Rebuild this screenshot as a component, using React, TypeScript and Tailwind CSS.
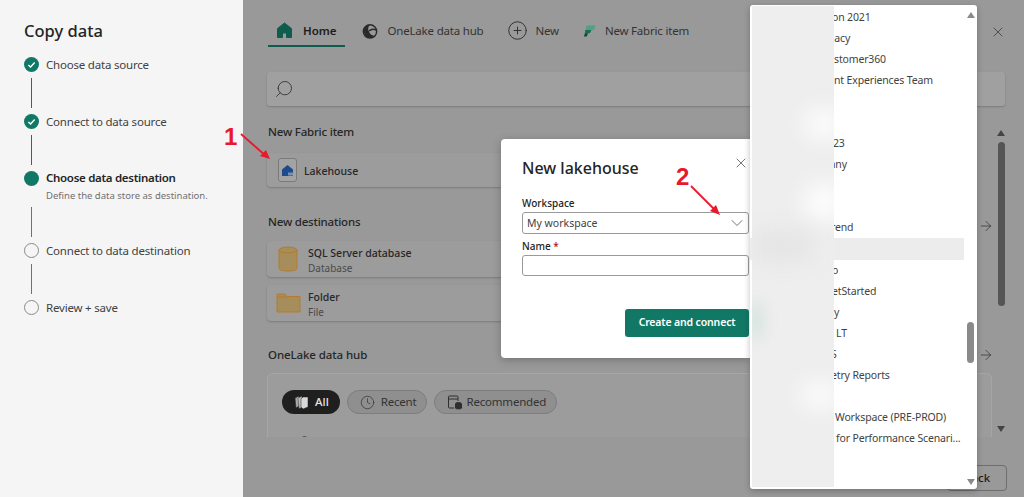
import React from 'react';
import { ChevronDown, CirclePlus, Clock, Search, X, ArrowRight } from 'lucide-react';

const font = { fontFamily: '"Noto Sans", sans-serif' };

const steps = [
  { label: 'Choose data source', state: 'done' },
  { label: 'Connect to data source', state: 'done' },
  { label: 'Choose data destination', state: 'active', hint: 'Define the data store as destination.' },
  { label: 'Connect to data destination', state: 'todo' },
  { label: 'Review + save', state: 'todo' },
];

const workspaces = [
  { text: 'on 2021', pad: 'pl-[82px]' },
  { text: 'gacy', pad: 'pl-[78px]' },
  { text: 'stomer360', pad: 'pl-[84px]' },
  { text: 'nt Experiences Team', pad: 'pl-[84px]' },
  { text: '', pad: '' },
  { text: '', pad: '' },
  { text: '23', pad: 'pl-[83px]' },
  { text: 'nny', pad: 'pl-[79px]' },
  { text: '', pad: '' },
  { text: '', pad: '' },
  { text: 'rend', pad: 'pl-[81px]' },
  { text: '', pad: '', active: true },
  { text: 'o', pad: 'pl-[82px]' },
  { text: 'etStarted', pad: 'pl-[82px]' },
  { text: 'y', pad: 'pl-[84px]' },
  { text: 'LT', pad: 'pl-[86px]' },
  { text: 'S', pad: 'pl-[81px]' },
  { text: 'etry Reports', pad: 'pl-[81px]' },
  { text: '', pad: '' },
  { text: 'Workspace (PRE-PROD)', pad: 'pl-[85px]' },
  { text: 'for Performance Scenari...', pad: 'pl-[86px]' },
];

const StepDot = ({ state }: { state: string }) => {
  if (state === 'todo') {
    return <div className="w-[15px] h-[15px] rounded-full border border-[#8a8a8a] bg-[#f5f5f5] shrink-0" />;
  }
  return (
    <div className="w-[15px] h-[15px] rounded-full bg-[#117865] flex items-center justify-center shrink-0">
      {state === 'done' && (
        <svg width="9" height="9" viewBox="0 0 10 10" fill="none" stroke="white" strokeWidth="1.6">
          <path d="M1.5 5.5 L4 7.8 L8.5 2.8" />
        </svg>
      )}
    </div>
  );
};

const Sidebar = () => (
  <aside className="w-[243px] h-full shrink-0 bg-[#f5f5f5] pl-6 pt-[20px]">
    <h1 className="text-[16.5px] leading-[22px] text-[#242424] font-medium">Copy data</h1>
    <div className="mt-[12px]">
      {steps.map((s, i) => (
        <div key={s.label}>
          <div className="flex items-center gap-[7px] h-[20px]">
            <StepDot state={s.state} />
            <span className={s.state === 'active' ? 'text-[11.5px] tracking-[-0.3px] font-semibold text-[#242424]' : 'text-[11.5px] tracking-[-0.2px] text-[#424242] pt-[1px]'}>
              {s.label}
            </span>
          </div>
          {s.hint && <div className="ml-[22px] text-[9.5px] leading-[15px] text-[#707070]">{s.hint}</div>}
          {i < steps.length - 1 && (
            <div className="h-[37px] flex items-center pl-[7px]">
              <div className={i < 2 ? 'w-px h-[30px] bg-[#117865]' : 'w-px h-[30px] bg-[#707070]'} />
            </div>
          )}
        </div>
      ))}
    </div>
  </aside>
);

const HomeIcon = () => (
  <svg width="17" height="17" viewBox="0 0 17 17" fill="#0f5c4e" stroke="#0f5c4e" strokeWidth="1" strokeLinejoin="round">
    <path d="M8.5 1 L15.5 6.5 V15.5 H10.5 V11 H6.5 V15.5 H1.5 V6.5 Z" />
  </svg>
);

const HubIcon = () => (
  <svg width="16" height="18" viewBox="0 0 18 18" fill="none" stroke="#2a2a2a" strokeWidth="1.6">
    <circle cx="9" cy="9.5" r="7.5" />
    <path d="M2 8 A7 7 0 0 1 9 2 C7 4 6.5 7 7.5 9 C9 13 12 15 15 14 A7.5 7.5 0 0 1 4 15 C2.5 13 2 10 2 8 Z" fill="#2a2a2a" stroke="none" />
    <path d="M8 9 C10 7 13 6.5 16 8" />
  </svg>
);

const FabricIcon = () => (
  <svg width="13" height="14" viewBox="0 0 14 14">
    <path d="M4 1 H13.5 L12 6 H2.5 Z" fill="#4ea383" />
    <path d="M2.5 6 H9 L7.5 9.5 H2 Z" fill="#1e6b53" />
    <path d="M2 9.5 H5.5 L4 13 H1 Z" fill="#0e4a3b" />
  </svg>
);

const DbIcon = () => (
  <svg width="20" height="26" viewBox="0 0 20 26" fill="#a58d5c" stroke="#b87a28" strokeWidth="1">
    <path d="M1 4 V22 C1 24 5 25 10 25 C15 25 19 24 19 22 V4" />
    <ellipse cx="10" cy="4" rx="9" ry="3" />
  </svg>
);

const FolderIcon = () => (
  <svg width="25" height="20" viewBox="0 0 25 20" fill="#a58d5c" stroke="#b87a28" strokeWidth="1">
    <path d="M1 1 H9 L11 3.5 H24 V19 H1 Z" />
    <path d="M1 4 H11" fill="none" />
  </svg>
);

const LakehouseIcon = () => (
  <div className="w-[19px] h-[24px] rounded-[3px] border border-[#7a7a7a] bg-[#a3a3a3] flex items-center justify-center">
    <svg width="13" height="13" viewBox="0 0 13 13">
      <path d="M6.5 1 L12 5.5 V12 H1 V5.5 Z" fill="#1e4a8e" />
      <rect x="7" y="8.5" width="5" height="3" fill="#7b8fb0" />
    </svg>
  </div>
);

const AllIcon = () => (
  <svg width="15" height="15" viewBox="0 0 15 15" fill="#d8d8d8" stroke="#1f1f1f" strokeWidth="0.5">
    <path d="M1 3 L5 1 V11 L2 13 Z" opacity="0.75" />
    <path d="M4 3 L8 1 V12 L5 14 Z" opacity="0.85" />
    <path d="M7 4 L9 2 H14 V12 L9 14 L7 12 Z" />
  </svg>
);

const RecommendedIcon = () => (
  <svg width="15" height="15" viewBox="0 0 15 15" fill="none" stroke="#2e2e2e" strokeWidth="1">
    <path d="M7 13 H2.5 A1 1 0 0 1 1.5 12 V2 A1 1 0 0 1 2.5 1 H10 A1 1 0 0 1 11 2 V6" />
    <path d="M1.5 4 H11" />
    <ellipse cx="11.5" cy="9" rx="3" ry="1.4" fill="#2e2e2e" />
    <path d="M8.5 9 V13 C8.5 14.2 14.5 14.2 14.5 13 V9" fill="#2e2e2e" />
  </svg>
);

const Tab = ({ icon, label, active, className }: { icon: React.ReactNode; label: string; active?: boolean; className?: string }) => (
  <div className={`flex items-center h-[31px] border-b-2 ${active ? 'gap-[10px] px-[8px] border-[#0f5c4e]' : 'gap-[10px] border-transparent'} ${className ?? ''}`}>
    {icon}
    <span className={active ? 'text-[11.5px] font-semibold text-[#1c1c1c]' : 'text-[11.5px] tracking-[-0.2px] text-[#333]'}>{label}</span>
  </div>
);

const Card = ({ icon, title, sub }: { icon: React.ReactNode; title: string; sub: string }) => (
  <div className="h-[36px] rounded-[4px] bg-[#9c9c9c] shadow-[0_1px_2px_rgba(0,0,0,0.2)] flex items-center">
    <div className="w-[41px] flex justify-center pl-[1px]">{icon}</div>
    <div className="flex flex-col pt-[3px]">
      <span className="text-[10.5px] leading-[15px] font-medium text-[#262626]">{title}</span>
      <span className="text-[10px] leading-[15px] text-[#4a4a4a]">{sub}</span>
    </div>
  </div>
);

const Pill = ({ icon, label, dark, className }: { icon: React.ReactNode; label: string; dark?: boolean; className?: string }) => (
  <div className={`${dark
    ? 'h-[24px] pl-[12px] pr-[11px] rounded-full bg-[#1f1f1f] flex items-center gap-[6px] text-[11.5px] font-medium text-[#e6e6e6]'
    : 'h-[24px] pl-[12px] pr-[10px] rounded-full bg-[#8f8f8f] border border-[#7d7d7d] flex items-center gap-[6px] text-[11.5px] tracking-[-0.2px] text-[#333]'} ${className ?? ''}`}>
    {icon}
    {label}
  </div>
);

const Main = () => (
  <main className="flex-1 h-full bg-[#999999] flex flex-col pl-[24px] pr-[19px]">
    <div className="flex items-center pt-[16px] pl-[1px]">
      <Tab active icon={<HomeIcon />} label="Home" />
      <Tab icon={<HubIcon />} label="OneLake data hub" className="ml-[17px]" />
      <Tab icon={<CirclePlus size={21} strokeWidth={1.1} color="#2e2e2e" />} label="New" className="ml-[24px] !gap-[7px]" />
      <Tab icon={<FabricIcon />} label="New Fabric item" className="ml-[24px] !gap-[9px]" />
      <X size={16} strokeWidth={1.1} color="#333" className="ml-auto -translate-x-[-1px]" />
    </div>

    <div className="mt-[25px] h-[34px] rounded-[3px] bg-[#a0a0a0] shadow-[0_1px_2px_rgba(0,0,0,0.2)] flex items-center pl-[7px]">
      <Search size={20} strokeWidth={1} color="#2e2e2e" className="-scale-x-100" />
    </div>

    <div className="flex-1 flex min-h-0">
      <div className="flex-1 min-w-0 pr-[5px]">
        <h2 className="mt-[18px] text-[11.5px] leading-[16px] tracking-[-0.2px] font-medium text-[#262626] pl-[1px]">New Fabric item</h2>
        <div className="mt-[13px] mr-[20px] h-[34px] rounded-[4px] bg-[#9c9c9c] shadow-[0_1px_2px_rgba(0,0,0,0.2)] flex items-center gap-[7px] pl-[11px]">
          <LakehouseIcon />
          <span className="pt-[3px] text-[10.5px] font-medium text-[#262626]">Lakehouse</span>
        </div>

        <div className="flex items-center mt-[27px] h-[16px]">
          <h2 className="text-[11.5px] tracking-[-0.2px] font-medium text-[#262626] pl-[1px]">New destinations</h2>
          <ArrowRight size={16} strokeWidth={1.1} color="#2e2e2e" className="ml-auto translate-x-[2px] translate-y-[4px]" />
        </div>
        <div className="mt-[11px] mr-[20px] flex flex-col gap-[8px]">
          <Card icon={<DbIcon />} title="SQL Server database" sub="Database" />
          <Card icon={<FolderIcon />} title="Folder" sub="File" />
        </div>

        <div className="flex items-center mt-[26px] h-[16px]">
          <h2 className="text-[11.5px] tracking-[-0.1px] font-medium text-[#262626] pl-[1px]">OneLake data hub</h2>
          <ArrowRight size={16} strokeWidth={1.1} color="#2e2e2e" className="ml-auto translate-x-[2px]" />
        </div>
        <div className="mt-[10px] h-[64px] rounded-t-[6px] bg-[#9c9c9c] border border-b-0 border-[#a6a6a6] pl-[14px] pt-[16px] overflow-hidden">
          <div className="flex items-start gap-[7px]">
            <Pill dark icon={<AllIcon />} label="All" />
            <Pill icon={<Clock size={15} strokeWidth={1.1} color="#2e2e2e" />} label="Recent" />
            <Pill icon={<RecommendedIcon />} label="Recommended" className="!gap-[4px]" />
          </div>
          <div className="mt-[22px] ml-[19px] w-[7px] h-[7px] rounded-full border border-[#444]" />
        </div>
      </div>

      <div className="w-[8px] flex flex-col items-center pt-[24px]">
        <div className="w-0 h-0 border-x-[4px] border-x-transparent border-b-[6px] border-b-[#444]" />
        <div className="w-[7px] h-[164px] mt-[6px] rounded-full bg-[#555] shrink-0" />
        <div className="w-0 h-0 mt-[120px] border-x-[4px] border-x-transparent border-t-[6px] border-t-[#444]" />
      </div>
    </div>

    <div className="h-[60px] flex items-end justify-end pb-[6px] -mr-[2px]">
      <div className="h-[26px] w-[60px] rounded-[4px] border border-[#6e6e6e] flex items-center justify-center text-[11.5px] font-medium text-[#1c1c1c]">
        Back
      </div>
    </div>
  </main>
);

const Dialog = () => (
  <div className="absolute left-[501px] top-[139px] w-[249px] h-[219px] bg-white rounded-l-[4px] shadow-[0_2px_8px_rgba(0,0,0,0.25)] pl-[21px] pr-[1px] pt-[17px]">
    <div className="flex items-center justify-between h-[24px]">
      <h2 className="text-[16px] font-medium text-[#242424]">New lakehouse</h2>
      <X size={16} strokeWidth={1.1} color="#424242" className="-translate-y-[5px]" />
    </div>
    <label className="block mt-[16px] text-[10px] leading-[14px] font-medium text-[#242424]">Workspace</label>
    <div className="mt-[2px] h-[22px] rounded-[3px] border border-[#9a9a9a] flex items-center justify-between pl-[4px] pr-px text-[10.5px] text-[#424242]">
      <span className="pt-[2px]">My workspace</span>
      <ChevronDown size={20} strokeWidth={0.9} color="#424242" />
    </div>
    <label className="block mt-[5px] text-[10px] leading-[14px] font-medium text-[#242424]">
      Name <span className="text-[#b10e1c]">*</span>
    </label>
    <div className="mt-[2px] h-[21px] rounded-[3px] border border-[#9a9a9a]" />
    <div className="flex justify-end mt-[33px]">
      <div className="w-[124px] h-[28px] rounded-[3px] bg-[#117865] text-white text-[10.5px] tracking-[-0.15px] font-semibold flex items-center justify-center">
        Create and connect
      </div>
    </div>
  </div>
);

const WorkspaceList = () => (
  <div className="absolute left-[750px] top-[5px] w-[227px] h-[484px] bg-white rounded-[3px] shadow-[0_2px_6px_rgba(0,0,0,0.25)] flex pt-[1px]">
    <div className="w-[214px] pt-[1px]">
      {workspaces.map((w, i) => (
        <div
          key={i}
          className={w.active
            ? 'h-[22px] bg-[#ececec] flex items-center'
            : `h-[21px] flex items-center whitespace-nowrap text-[10.5px] tracking-[-0.15px] text-[#424242] ${w.pad}`}
        >
          {w.text}
        </div>
      ))}
    </div>
    <div className="flex-1 flex flex-col items-center pt-[6px]">
      <div className="w-0 h-0 border-x-[4px] border-x-transparent border-b-[6px] border-b-[#8a8a8a]" />
      <div className="w-[7px] h-[41px] mt-[304px] rounded-full bg-[#8a8a8a] shrink-0" />
      <div className="w-0 h-0 mt-[116px] border-x-[4px] border-x-transparent border-t-[6px] border-t-[#8a8a8a]" />
    </div>
    {/* redacted names */}
    <div className="absolute left-[2px] top-[1px] w-[82px] h-[481px] bg-[#eeeeee] overflow-hidden">
      <div className="absolute left-[52px] top-[105px] w-[40px] h-[26px] rounded-full bg-white blur-md" />
      <div className="absolute left-[52px] top-[178px] w-[40px] h-[36px] rounded-full bg-white blur-md" />
      <div className="absolute left-0 top-[228px] w-[60px] h-[24px] bg-[#e2e2e2] blur-md" />
      <div className="absolute left-0 top-[298px] w-[8px] h-[34px] rounded-full bg-[#bfdcd3] blur-sm" />
      <div className="absolute left-[48px] top-[378px] w-[40px] h-[22px] rounded-full bg-white blur-md" />
    </div>
  </div>
);

const Callout = ({ n, className, d, head }: { n: string; className: string; d: string; head: string }) => (
  <div className={`absolute ${className}`}>
    <span className="absolute left-0 top-0 text-[24px] leading-[24px] font-bold text-[#e8192c]" style={{ fontFamily: '"Liberation Sans", sans-serif' }}>{n}</span>
    <svg width="70" height="60" viewBox="0 0 70 60" className="absolute left-0 top-0" fill="none" stroke="#e8192c" strokeWidth="1.8">
      <path d={d} />
      <path d={head} fill="#e8192c" stroke="none" />
    </svg>
  </div>
);

export default function App() {
  return (
    <div className="relative w-[1024px] h-[497px] overflow-hidden flex" style={font}>
      <Sidebar />
      <Main />
      <Dialog />
      <WorkspaceList />
      <Callout n="1" className="left-[224px] top-[125px] w-[70px] h-[60px]" d="M17 9 L42 31" head="M46 34 L36 31 L42 25 Z" />
      <Callout n="2" className="left-[676px] top-[165px] w-[70px] h-[60px]" d="M15 21 L40 46" head="M44 50 L34 46 L40 40 Z" />
    </div>
  );
}
